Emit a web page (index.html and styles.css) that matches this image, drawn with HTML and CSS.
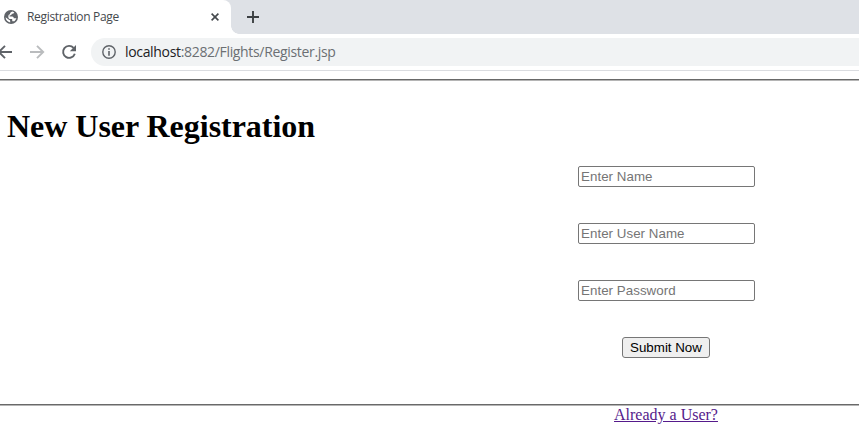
FILE: index.html
```html
<!DOCTYPE html>
<html lang="en">
<head>
<meta charset="utf-8">
<title>Registration Page</title>
<link rel="stylesheet" href="styles.css">
</head>
<body>
<header class="browser">
  <div class="tabstrip">
    <div class="tab">
      <svg class="globe" width="14" height="14" viewBox="0 0 14 14"><circle cx="7" cy="7" r="7" fill="#5f6368"/><path d="M8.4 1.6C9.3 1.8 9.8 2.1 10.3 2.5 9.9 3.5 9.2 3.8 7.8 3.8 7.7 4.9 7 5.3 5.6 5.4V6.4H8.2C9.4 6.4 9.7 7.3 9.8 8.3H11.2C11.8 8.3 12.1 7.9 12.4 8 12.1 9.4 11.4 10.5 10.4 11.3H8.9C8.5 11.3 8.2 10.9 8.2 10.4V9.1H6.5C5.2 9.1 4.3 8.3 4.3 7 4.3 5.3 4.7 4.3 6 4.2 6 2.9 6.8 2.2 8.4 1.6ZM1.6 7.3 4.2 9.2C5.2 9.8 6.2 10.1 6.2 11.2V12.4C3.7 12.1 1.7 10.1 1.6 7.3Z" fill="#fff"/></svg>
      <span class="tab-title">Registration Page</span>
      <svg class="close" width="8" height="8" viewBox="0 0 8 8"><path d="M.6.6 7.4 7.4M7.4.6.6 7.4" stroke="#45494d" stroke-width="1.6"/></svg>
    </div>
    <div class="strip-rest">
      <svg width="12" height="12" viewBox="0 0 12 12"><path d="M6 0V12M0 6H12" stroke="#3c4043" stroke-width="1.9"/></svg>
    </div>
  </div>
  <div class="toolbar">
    <svg class="nav" width="80" height="16" viewBox="0 0 80 16" fill="none" stroke-width="1.9">
      <path d="M12 8H-1M5 1.8-1.2 8 5 14.2" stroke="#5f6368"/>
      <path d="M30 8H43M37 1.8 43.2 8 37 14.2" stroke="#babcbe"/>
      <path d="M73.6 3.9A6 6 0 1 0 74.8 9.8" stroke="#5f6368"/>
      <path d="M76 1V7.2H69.8Z" fill="#5f6368"/>
    </svg>
    <div class="address">
      <svg width="14" height="14" viewBox="0 0 14 14"><circle cx="7" cy="7" r="6.2" fill="none" stroke="#5f6368" stroke-width="1.4"/><path d="M7 3.2V4.8M7 6V10.8" stroke="#5f6368" stroke-width="1.6"/></svg>
      <span class="url"><span class="host">localhost</span>:8282/Flights/Register.jsp</span>
    </div>
  </div>
</header>
<main>
  <hr>
  <h1>New User Registration</h1>
  <form class="column">
    <input type="text" placeholder="Enter Name">
    <input type="text" placeholder="Enter User Name">
    <input type="password" placeholder="Enter Password">
    <button type="button">Submit Now</button>
  </form>
  <hr>
  <div class="column"><a href="#">Already a User?</a></div>
</main>
</body>
</html>
```
FILE: styles.css
```css
* { box-sizing: border-box; }
body { margin: 0; height: 442px; overflow: hidden; background: #fff; font: 16px "Liberation Serif", serif; }
svg { display: block; flex: none; }
.browser { height: 71px; border-bottom: 1px solid #dadce0; font-family: "Open Sans", sans-serif; }
.tabstrip { display: flex; height: 34px; background: #dee1e6; }
.tab { position: relative; display: flex; align-items: center; width: 231px; padding-left: 4px; border-top-right-radius: 8px; background: #fff; }
.tab::after { content: ""; position: absolute; left: 100%; bottom: 0; width: 8px; height: 8px; background: radial-gradient(circle at 100% 0, transparent 7.5px, #fff 8px); }
.tab-title { width: 184px; margin-left: 9px; font-size: 12px; line-height: 16px; letter-spacing: -0.32px; color: #45494d; white-space: nowrap; }
.strip-rest { display: flex; align-items: center; padding-left: 16px; }
.toolbar { display: flex; align-items: center; height: 36px; }
.address { display: flex; align-items: center; gap: 9px; flex: 1; height: 28px; margin-left: 11px; padding-left: 11px; border-radius: 14px 0 0 14px; background: #f1f3f4; }
.url { font-size: 14px; line-height: 20px; letter-spacing: -0.33px; color: #6b6f73; white-space: nowrap; }
.host { color: #202124; }
hr { height: 2px; margin: 0; border: 0; border-top: 1px solid #696969; background: #b5b5b5; }
main { padding-top: 8px; }
h1 { margin: 27px 0 0 7px; font-size: 32px; line-height: 37px; letter-spacing: -0.03px; }
.column { display: flex; flex-direction: column; align-items: center; width: 177px; margin-left: 578px; }
form.column { gap: 36px; margin-top: 21px; margin-bottom: 46px; }
input { width: 177px; height: 21px; margin: 0; padding: 1px 2px; border: 1px solid #767676; border-radius: 2px; background: #fff; font: 13.333px "Liberation Sans", sans-serif; letter-spacing: 0.04px; }
input::placeholder { color: #757575; opacity: 1; }
button { width: 88px; height: 21px; margin: 0 1px 0 0; padding: 0; border: 1px solid #767676; border-radius: 3px; background: #efefef; color: #000; font: 13.333px "Liberation Sans", sans-serif; }
a { margin-right: 1px; color: #551a8b; line-height: 18px; white-space: nowrap; }
```
